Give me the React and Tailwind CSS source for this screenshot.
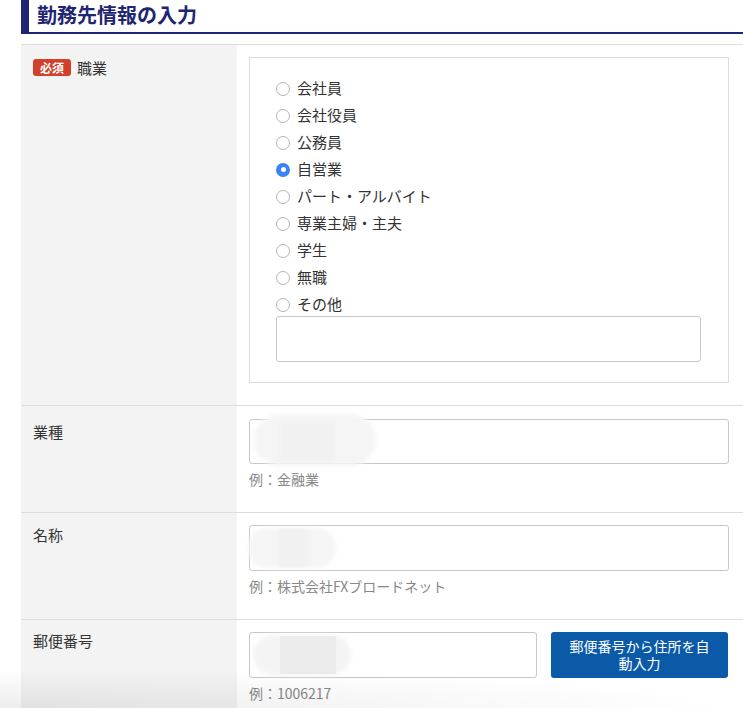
import React, { useState } from 'react';

const jp = { fontFamily: '"Noto Sans CJK JP", "Noto Sans", sans-serif' };

const options = ['会社員', '会社役員', '公務員', '自営業', 'パート・アルバイト', '専業主婦・主夫', '学生', '無職', 'その他'];

function Radio({ checked }) {
  if (checked) {
    return (
      <span className="w-[14px] h-[14px] rounded-full bg-[#3b82f6] flex items-center justify-center shrink-0">
        <span className="w-[5px] h-[5px] rounded-full bg-white" />
      </span>
    );
  }
  return <span className="w-[14px] h-[14px] rounded-full border border-[#b5b5b5] bg-white shrink-0" />;
}

function Row({ label, required, labelPt, children }) {
  return (
    <div className="grid grid-cols-[216px_1fr] border-b border-[#dcdcdc]">
      <div className={`bg-[#f3f3f3] px-3 flex items-start gap-[6px] ${labelPt}`}>
        {required && (
          <span className="mt-[3px] bg-[#d2402b] text-white text-[12px] font-bold leading-[17px] px-[7px] rounded-[3px]">必須</span>
        )}
        <span className="text-[15px] leading-[24px] text-[#333]">{label}</span>
      </div>
      <div className="pl-3 pr-[14px]">{children}</div>
    </div>
  );
}

function Hint({ children }) {
  return <div className="mt-[5px] text-[14px] leading-[20px] text-[#888]">{children}</div>;
}

export default function App() {
  const [job, setJob] = useState('自営業');

  return (
    <div className="relative w-[743px] h-[708px] overflow-hidden bg-white" style={jp}>
      <div className="ml-[21px]">
        <h2 className="flex h-[34px] border-b-2 border-[#1e2572]">
          <span className="w-[8px] bg-[#1e2572]" />
          <span className="pl-[8px] text-[20px] font-bold leading-[30px] text-[#1e2572]">勤務先情報の入力</span>
        </h2>

        <div className="mt-[10px] border-t border-[#dcdcdc]">
          <Row label="職業" required labelPt="pt-[11px]">
            <div className="pt-3 pb-[22px]">
              <div className="border border-[#dcdcdc] pl-[26px] pr-[27px] pt-[17px] pb-[20px]">
                {options.map((o) => (
                  <label key={o} onClick={() => setJob(o)} className="flex items-center gap-[7px] h-[27px] cursor-pointer">
                    <Radio checked={job === o} />
                    <span className="text-[15px] text-[#333]">{o}</span>
                  </label>
                ))}
                <input className="-mt-[2px] w-full h-[46px] border border-[#c8c8c8] rounded-[3px] outline-none" />
              </div>
            </div>
          </Row>

          <Row label="業種" labelPt="pt-[14px]">
            <div className="pt-[13px] pb-[23px]">
              <div className="relative h-[45px] border border-[#c8c8c8] rounded-[3px] bg-white">
                <div className="absolute left-[4px] top-[-6px] w-[122px] h-[52px] rounded-[26px] bg-[#f5f5f5] blur-[2px]" />
                <div className="absolute left-[30px] top-[2px] w-[55px] h-[40px] bg-[#f1f1f1] blur-[1px]" />
              </div>
              <Hint>例：金融業</Hint>
            </div>
          </Row>

          <Row label="名称" labelPt="pt-[10px]">
            <div className="pt-3 pb-[23px]">
              <div className="relative h-[46px] border border-[#c8c8c8] rounded-[3px] bg-white">
                <div className="absolute left-[-2px] top-[2px] w-[88px] h-[40px] rounded-[20px] bg-[#f5f5f5] blur-[2px]" />
                <div className="absolute left-[28px] top-[3px] w-[30px] h-[38px] bg-[#f1f1f1] blur-[1px]" />
              </div>
              <Hint>例：株式会社FXブロードネット</Hint>
            </div>
          </Row>

          <Row label="郵便番号" labelPt="pt-[9px]">
            <div className="pt-3 pb-[22px]">
              <div className="flex items-start gap-[14px]">
                <div className="relative w-[288px] h-[46px] border border-[#c8c8c8] rounded-[3px] bg-white">
                  <div className="absolute left-[3px] top-[2px] w-[98px] h-[40px] rounded-[20px] bg-[#f4f4f4] blur-[2px]" />
                  <div className="absolute left-[30px] top-[3px] w-[56px] h-[38px] bg-[#ebebeb]" />
                </div>
                <button className="w-[177px] h-[46px] rounded-[3px] bg-[#0b5aa8] text-white text-[14px] leading-[17px] px-[16px]">
                  郵便番号から住所を自動入力
                </button>
              </div>
              <Hint>例：1006217</Hint>
            </div>
          </Row>
        </div>
      </div>

      <div className="pointer-events-none absolute left-0 bottom-0 w-[743px] h-[40px] bg-[radial-gradient(ellipse_at_bottom_left,rgba(0,0,0,0.07),transparent_70%)]" />
    </div>
  );
}
